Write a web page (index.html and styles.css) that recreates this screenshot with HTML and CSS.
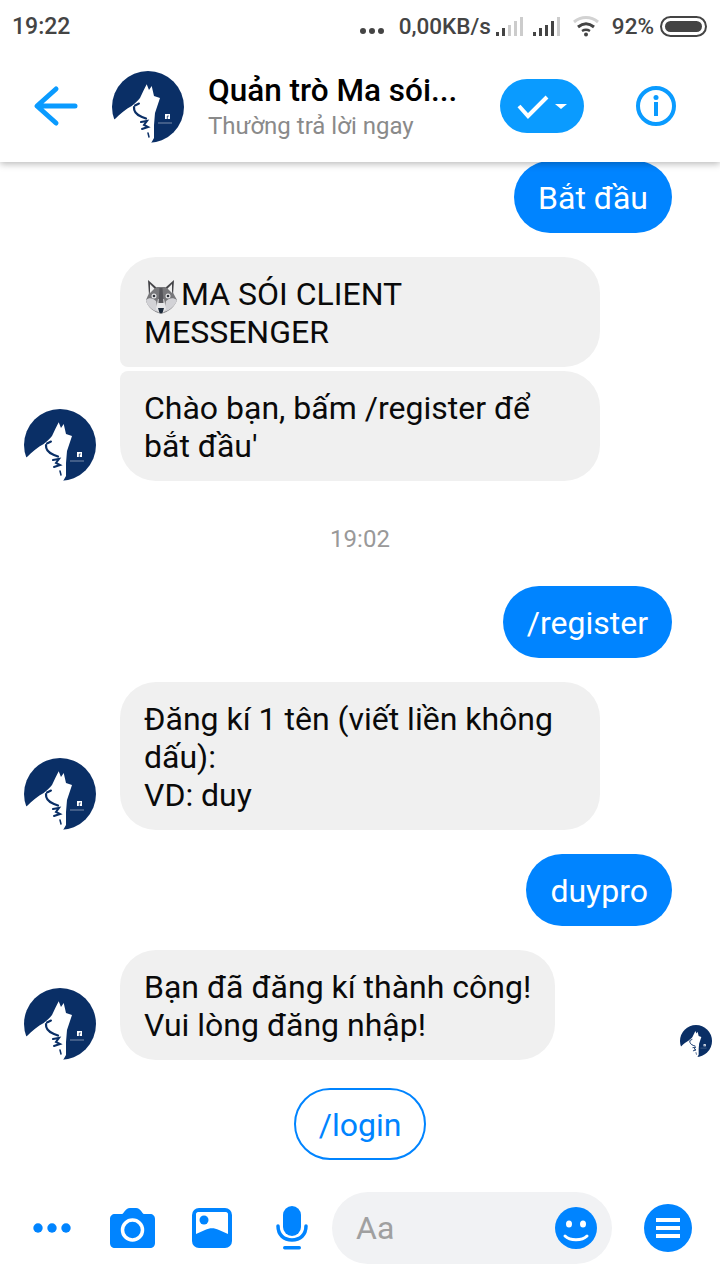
FILE: index.html
```html
<!DOCTYPE html>
<html lang="vi">
<head>
<meta charset="utf-8">
<title>Quản trò Ma sói</title>
<link rel="stylesheet" href="styles.css">
</head>
<body>
<svg class="defs" width="0" height="0" aria-hidden="true">
  <defs>
    <symbol id="wolf" viewBox="0 0 72 72" overflow="visible">
      <circle cx="36" cy="36" r="36" fill="#0a2f66"/>
      <path fill="#fff" d="M-2 50 L3 48 C8 43 14 38 19.700 35 C23 32 26 30 28 27 L31.300 20 L34.700 13.300 L37 19 L39.700 15 L42 25 L48 27 L43 42 L42 54 L42 67 L38 74 L-2 74 Z"/>
      <path fill="none" stroke="#0a2f66" stroke-width="2.200" stroke-linecap="round" d="M22 36 C21.500 41 25 44 30 46 L34 47.500"/>
      <path fill="none" stroke="#0a2f66" stroke-width="2" stroke-linecap="round" d="M23 34.500 L27 32.500 M29 51 L35 50 L32 54 L36 56 L30 58"/>
      <path fill="none" stroke="#0a2f66" stroke-width="1.500" stroke-linecap="round" d="M36 62 L37 66"/>
      <path fill="none" stroke="#aab6c9" stroke-width=".7" d="M46 52 H60"/>
      <rect x="53" y="43" width="5" height="5" fill="#fff"/>
      <path d="M55.300 48 V45 H56.800" stroke="#0a2f66" stroke-width=".8" fill="none"/>
    </symbol>
  </defs>
</svg>

<div class="phone">
  <div class="status">
    <span class="time">19:22</span>
    <svg class="st-dots" width="26" height="8" viewBox="0 0 26 8"><g fill="#444"><circle cx="4" cy="4" r="3"/><circle cx="13" cy="4" r="3"/><circle cx="22" cy="4" r="3"/></g></svg>
    <span class="speed">0,00KB/s</span>
    <svg class="sig-a" width="28" height="20" viewBox="0 0 28 20"><rect x="0" y="15" width="3" height="4" fill="#444"/><rect x="6" y="11" width="3" height="8" fill="#444"/><rect x="12" y="8" width="3" height="11" fill="#ccc"/><rect x="18" y="4" width="3" height="15" fill="#ccc"/><rect x="24" y="0" width="3" height="19" fill="#ccc"/></svg>
    <svg class="sig-b" width="28" height="20" viewBox="0 0 28 20"><rect x="0" y="15" width="3" height="4" fill="#444"/><rect x="6" y="11" width="3" height="8" fill="#444"/><rect x="12" y="8" width="3" height="11" fill="#444"/><rect x="18" y="4" width="3" height="15" fill="#444"/><rect x="24" y="0" width="3" height="19" fill="#ccc"/></svg>
    <svg class="wifi" width="28" height="22" viewBox="0 0 28 22"><path d="M2 7 C9 1 19 1 26 7" fill="none" stroke="#d2d2d2" stroke-width="3"/><path d="M6 12 C11 8 17 8 22 12" fill="none" stroke="#444" stroke-width="3"/><path d="M10 16 C12.500 14.500 15.500 14.500 18 16" fill="none" stroke="#444" stroke-width="2.500"/><circle cx="14" cy="19.500" r="2" fill="#444"/></svg>
    <span class="pct">92%</span>
    <svg class="batt" width="47" height="21" viewBox="0 0 47 21"><rect x="1" y="1" width="45" height="19" rx="9.500" fill="none" stroke="#444" stroke-width="2"/><rect x="5" y="5" width="37" height="11" rx="5.500" fill="#444"/></svg>
  </div>

  <header class="bar">
    <svg class="back" width="44" height="40" viewBox="0 0 44 40"><path d="M41 20 H4 M22 3 L3 20 L22 37" fill="none" stroke="#0a9bff" stroke-width="5" stroke-linecap="round" stroke-linejoin="round"/></svg>
    <svg class="av-head" width="72" height="72"><use href="#wolf"/></svg>
    <div class="who">
      <div class="name">Quản trò Ma sói...</div>
      <div class="sub">Thường trả lời ngay</div>
    </div>
    <div class="pill">
      <svg width="60" height="30" viewBox="0 0 60 30"><path d="M7 15 L16 25 L35 6" fill="none" stroke="#fff" stroke-width="4"/><path d="M43 13 H55 L49 18 Z" fill="#fff"/></svg>
    </div>
    <svg class="info" width="40" height="40" viewBox="0 0 40 40"><circle cx="20" cy="20" r="18" fill="none" stroke="#0a9bff" stroke-width="4"/><circle cx="20" cy="11.500" r="2.500" fill="#0a9bff"/><rect x="18" y="16" width="4" height="14" fill="#0a9bff"/></svg>
  </header>

  <main class="thread">
    <div class="row out first"><div class="bubble me">Bắt đầu</div></div>

    <div class="row in grouped"><div class="bubble them top"><svg class="emoji" width="37" height="36" viewBox="0 0 37 36"><path d="M4 1 L13 9 L5 16 Z M30 1 L21 9 L29 16 Z" fill="#444448"/><path d="M6 12 L13 8 H21 L28 12 L33 21 C31 28 24 33 17 35 C10 33 3 28 2 21 Z" fill="#77777a"/><path d="M6 5 L10.500 9.500 L6 14 Z M28 5 L23.500 9.500 L28 14 Z" fill="#eeeeee"/><path d="M2 21 C5 18 9 19 12 22 L14 33 C8 31 3 27 2 21 Z M33 21 C29 18 25 19 22 22 L20 33 C26 31 31 27 33 21 Z" fill="#d2d2d6"/><path d="M14 20 H20 L22 30 L19 34 H15 L12 30 Z" fill="#e6e6e8"/><path d="M15.500 9 H18.500 L19.500 24 H14.500 Z" fill="#55555a"/><circle cx="10" cy="17" r="2.500" fill="#e8e8ea"/><circle cx="24" cy="17" r="2.500" fill="#e8e8ea"/><circle cx="10" cy="17" r="1.300" fill="#2d3138"/><circle cx="24" cy="17" r="1.300" fill="#2d3138"/><path d="M14 29 H20 L18.500 34 H15.500 Z" fill="#1d2a3a"/></svg>MA SÓI CLIENT<br>MESSENGER</div></div>

    <div class="row in tight">
      <svg class="av" width="72" height="72"><use href="#wolf"/></svg>
      <div class="bubble them bottom">Chào bạn, bấm /register để bắt đầu'</div>
    </div>

    <div class="stamp">19:02</div>

    <div class="row out"><div class="bubble me">/register</div></div>

    <div class="row in">
      <svg class="av" width="72" height="72"><use href="#wolf"/></svg>
      <div class="bubble them">Đăng kí 1 tên (viết liền không dấu):<br>VD: duy</div>
    </div>

    <div class="row out"><div class="bubble me">duypro</div></div>

    <div class="row in">
      <svg class="av" width="72" height="72"><use href="#wolf"/></svg>
      <div class="bubble them">Bạn đã đăng kí thành công!<br>Vui lòng đăng nhập!</div>
      <svg class="seen" width="32" height="32"><use href="#wolf"/></svg>
    </div>

    <div class="quick"><span class="chip">/login</span></div>
  </main>

  <footer class="composer">
    <svg class="c-dots" width="38" height="10" viewBox="0 0 38 10"><g fill="#0084ff"><circle cx="5" cy="5" r="4.700"/><circle cx="19" cy="5" r="4.700"/><circle cx="33" cy="5" r="4.700"/></g></svg>
    <svg class="c-cam" width="45" height="40" viewBox="0 0 45 40"><path d="M5 6 H12 C14 6 15 0 20 0 H26 C31 0 32 6 34 6 H40 C43 6 45 8 45 11 V35 C45 38 43 40 40 40 H5 C2 40 0 38 0 35 V11 C0 8 2 6 5 6 Z" fill="#0084ff"/><circle cx="22.500" cy="22" r="10" fill="none" stroke="#fff" stroke-width="3.500"/></svg>
    <svg class="c-pic" width="40" height="40" viewBox="0 0 40 40"><rect width="40" height="40" rx="7" fill="#0084ff"/><path d="M4 26 V6 C4 5 5 4 6 4 H34 C35 4 36 5 36 6 V26 L27 22 C22 19.500 18 19.500 13 22 Z" fill="#fff"/><circle cx="12" cy="12" r="4.500" fill="#0084ff"/></svg>
    <svg class="c-mic" width="32" height="44" viewBox="0 0 32 44"><rect x="7" y="0" width="18" height="30" rx="9" fill="#0084ff"/><path d="M2 20 C2 29 8 34 16 34 C24 34 30 29 30 20" fill="none" stroke="#0084ff" stroke-width="3.500" stroke-linecap="round"/><rect x="7" y="40" width="18" height="3.500" rx="1.700" fill="#0084ff"/></svg>
    <div class="input">
      <span class="ph">Aa</span>
      <svg width="42" height="42" viewBox="0 0 42 42"><circle cx="21" cy="21" r="21" fill="#0084ff"/><ellipse cx="14" cy="17" rx="3" ry="3.500" fill="#fff"/><ellipse cx="28" cy="17" rx="3" ry="3.500" fill="#fff"/><path d="M10 29 C15 34 27 34 32 29" fill="none" stroke="#fff" stroke-width="3" stroke-linecap="round"/></svg>
    </div>
    <svg class="c-menu" width="48" height="48" viewBox="0 0 48 48"><circle cx="24" cy="24" r="24" fill="#0084ff"/><g fill="#fff"><rect x="12" y="14" width="24" height="4"/><rect x="12" y="22" width="24" height="4"/><rect x="12" y="30" width="24" height="4"/></g></svg>
  </footer>
</div>
</body>
</html>
```
FILE: styles.css
```css
* { box-sizing: border-box; }
html, body { margin: 0; padding: 0; background: #fff; }
.defs { display: block; height: 0; }
svg { display: block; flex: none; overflow: visible; }

.phone {
  width: 720px;
  height: 1280px;
  overflow: hidden;
  display: flex;
  flex-direction: column;
  font-family: Roboto, "Noto Sans", sans-serif;
  color: #000;
}

/* status bar */
.status {
  height: 52px;
  flex: none;
  display: flex;
  align-items: center;
  padding: 0 13px 0 13px;
  color: #444;
  font-size: 22.5px;
  font-weight: 500;
  background: #fff;
  position: relative;
  z-index: 3;
}
.time { margin-right: auto; font-size: 23px; margin-left: -1px; }
.st-dots { margin-top: 10px; }
.speed { margin-left: 14px; }
.sig-a { margin-left: 5px; margin-top: 1px; }
.sig-b { margin-left: 9px; margin-top: 1px; }
.wifi { margin-left: 11px; }
.pct { margin-left: 12px; }
.batt { margin-left: 6px; }

/* header */
.bar {
  height: 110px;
  flex: none;
  display: flex;
  align-items: center;
  padding-left: 34px;
  position: relative;
  z-index: 2;
  background: #fff;
  box-shadow: 0 2px 7px rgba(0, 0, 0, .28);
}
.av-head { margin-left: 34px; margin-top: -1px; }
.who { margin-left: 24px; width: 292px; }
.name { font-size: 31.5px; font-weight: 500; line-height: 38px; white-space: nowrap; }
.sub { font-size: 24px; line-height: 32px; color: #8a8a8a; white-space: nowrap; }
.pill {
  width: 84px;
  height: 54px;
  border-radius: 27px;
  background: #0a9bff;
  display: flex;
  align-items: center;
  justify-content: center;
  margin-top: -2px;
}
.info { margin-left: 52px; margin-top: -2px; }
.back { margin-top: -2px; }

/* thread */
.thread {
  flex: 1;
  min-height: 0;
  overflow: hidden;
  font-size: 32px;
  line-height: 38px;
}
.row { display: flex; align-items: flex-end; margin-top: 24px; padding: 0 48px 0 24px; }
.row.first { margin-top: -1px; }
.row.tight { margin-top: 4px; }
.row.out { justify-content: flex-end; }
.row.grouped { padding-left: 120px; }

.bubble { padding: 18px 24px 16px; border-radius: 36px; max-width: 480px; }
.me { background: #0084ff; color: #fff; }
.them { background: #f0f0f0; color: #0a0a0a; }
.row.in .them { width: fit-content; }
.row.grouped .them { width: 480px; }
.top { border-bottom-left-radius: 8px; }
.bottom { border-top-left-radius: 8px; width: 480px; }
.av { margin-right: 24px; }
.seen { margin-left: auto; margin-right: -40px; margin-bottom: 3px; }
.emoji { display: inline-block; vertical-align: -4px; margin: -6px 0 -6px 0; }

.stamp {
  margin-top: 38px;
  margin-bottom: 27px;
  text-align: center;
  font-size: 24px;
  line-height: 40px;
  color: #999;
}

.quick { display: flex; justify-content: center; margin-top: 28px; }
.chip {
  display: block;
  height: 72px;
  padding: 0 23px;
  border: 2px solid #0084ff;
  border-radius: 36px;
  color: #0084ff;
  line-height: 70px;
}

/* composer */
.composer {
  height: 88px;
  flex: none;
  display: flex;
  align-items: center;
  padding: 0 0 16px 33px;
}
.c-cam { margin-left: 39px; }
.c-pic { margin-left: 37px; }
.c-mic { margin-left: 44px; }
.input {
  margin-left: 24px;
  width: 280px;
  height: 72px;
  border-radius: 36px;
  background: #f1f2f4;
  display: flex;
  align-items: center;
  justify-content: space-between;
  padding: 0 15px 0 24px;
}
.ph { font-size: 32px; color: #a0a0a0; }
.c-menu { margin-left: 32px; }
```
